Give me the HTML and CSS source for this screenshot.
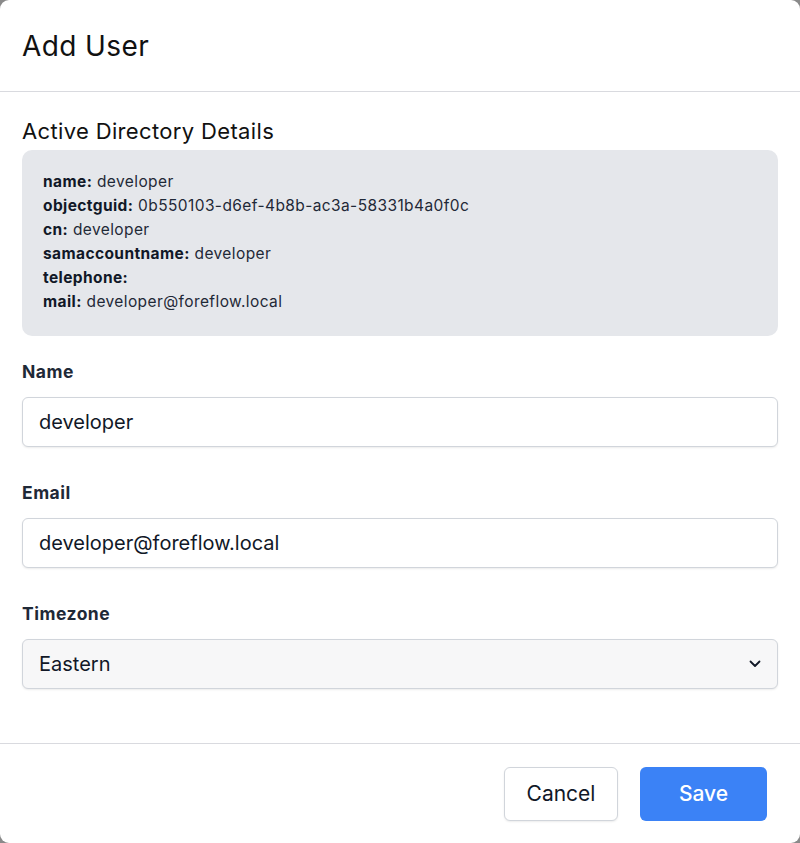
FILE: index.html
```
<!DOCTYPE html>
<html>
<head>
<meta charset="utf-8">
<link rel="stylesheet" href="styles.css">
</head>
<body>
<div class="modal">
  <header class="modal-header">
    <h1 class="title">Add User</h1>
  </header>
  <div class="modal-body">
    <h2 class="section-title">Active Directory Details</h2>
    <div class="details">
      <div><b>name:</b> developer</div>
      <div><b>objectguid:</b> 0b550103-d6ef-4b8b-ac3a-58331b4a0f0c</div>
      <div><b>cn:</b> developer</div>
      <div><b>samaccountname:</b> developer</div>
      <div><b>telephone:</b></div>
      <div><b>mail:</b> developer@foreflow.local</div>
    </div>
    <div class="field">
      <label class="label">Name</label>
      <div class="input">developer</div>
    </div>
    <div class="field">
      <label class="label">Email</label>
      <div class="input">developer@foreflow.local</div>
    </div>
    <div class="field">
      <label class="label">Timezone</label>
      <div class="input select">
        <span>Eastern</span>
        <svg class="chev" width="12" height="8" viewBox="0 0 12 8"><path d="M1.5 1.5 L6 6 L10.5 1.5" fill="none" stroke="#111827" stroke-width="1.8" stroke-linecap="round" stroke-linejoin="round"/></svg>
      </div>
    </div>
  </div>
  <footer class="modal-footer">
    <button class="btn btn-cancel">Cancel</button>
    <button class="btn btn-save">Save</button>
  </footer>
</div>
</body>
</html>
```
FILE: styles.css
```
html, body {
  margin: 0;
  padding: 0;
  background: #8a8a8a;
}
body {
  font-family: Inter, "Noto Sans", sans-serif;
  color: #111827;
}
.modal {
  width: 800px;
  height: 843px;
  background: #fff;
  border-radius: 9px;
  display: flex;
  flex-direction: column;
  box-sizing: border-box;
}
.modal-header {
  height: 92px;
  border-bottom: 1px solid #d9dadf;
  display: flex;
  align-items: center;
  padding: 0 22px;
  box-sizing: border-box;
}
.title {
  margin: 0;
  font-size: 28px;
  letter-spacing: 0.4px;
  font-weight: 400;
  color: #111;
}
.modal-body {
  padding: 24px 22px 0;
  height: 652px;
  box-sizing: border-box;
  border-bottom: 1px solid #d9dadf;
}
.section-title {
  margin: 0 0 4px;
  font-size: 22px;
  letter-spacing: 0.35px;
  font-weight: 400;
  line-height: 30px;
  color: #111;
}
.details {
  background: #e5e7eb;
  border-radius: 10px;
  padding: 20px 21px 22px;
  font-size: 15.5px;
  letter-spacing: 0.4px;
  line-height: 24px;
  color: #1f2937;
}
.details b {
  font-weight: 700;
  color: #111827;
}
.field {
  margin-top: 24px;
}
.field + .field {
  margin-top: 34px;
}
.label {
  display: block;
  font-size: 17.5px;
  letter-spacing: 0.5px;
  font-weight: 700;
  line-height: 24px;
  color: #1f2937;
  margin-bottom: 13px;
}
.input {
  height: 50px;
  box-sizing: border-box;
  border: 1px solid #d1d5db;
  border-radius: 6px;
  box-shadow: 0 1px 2px rgba(0,0,0,0.08);
  padding: 0 16px;
  display: flex;
  align-items: center;
  font-size: 20px;
  color: #111827;
  background: #fff;
}
.select {
  background: #f7f7f8;
  justify-content: space-between;
}
.modal-footer {
  flex: 1;
  display: flex;
  justify-content: flex-end;
  align-items: center;
  gap: 22px;
  padding: 0 33px 0 0;
}
.btn {
  font-family: Inter, "Noto Sans", sans-serif;
  font-size: 21px;
  height: 54px;
  border-radius: 6px;
  cursor: pointer;
}
.btn-cancel {
  width: 114px;
  background: #fff;
  border: 1px solid #d1d5db;
  color: #111827;
  box-shadow: 0 1px 2px rgba(0,0,0,0.08);
}
.btn-save {
  width: 127px;
  background: #3b82f6;
  border: none;
  color: #fff;
  font-weight: 500;
}
```
